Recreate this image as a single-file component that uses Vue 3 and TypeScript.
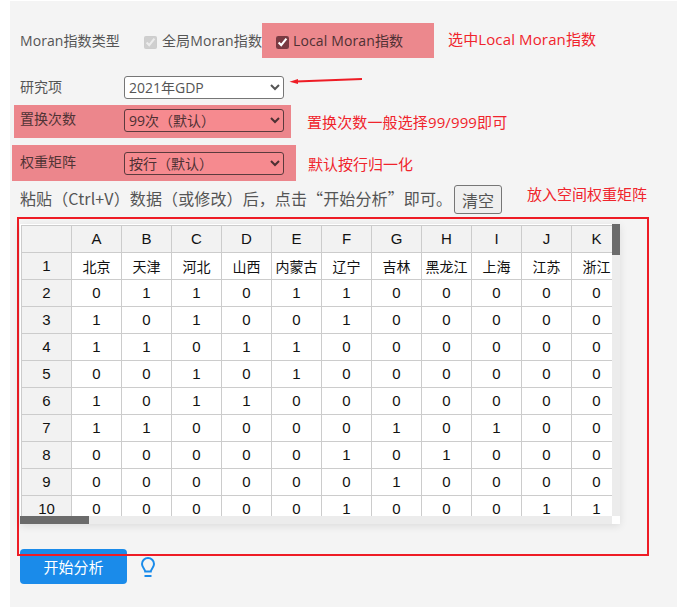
<script setup lang="ts">
const cols = ['A', 'B', 'C', 'D', 'E', 'F', 'G', 'H', 'I', 'J', 'K']
const names = ['北京', '天津', '河北', '山西', '内蒙古', '辽宁', '吉林', '黑龙江', '上海', '江苏', '浙江']
const rows: number[][] = [
  [0, 1, 1, 0, 1, 1, 0, 0, 0, 0, 0],
  [1, 0, 1, 0, 0, 1, 0, 0, 0, 0, 0],
  [1, 1, 0, 1, 1, 0, 0, 0, 0, 0, 0],
  [0, 0, 1, 0, 1, 0, 0, 0, 0, 0, 0],
  [1, 0, 1, 1, 0, 0, 0, 0, 0, 0, 0],
  [1, 1, 0, 0, 0, 0, 1, 0, 1, 0, 0],
  [0, 0, 0, 0, 0, 1, 0, 1, 0, 0, 0],
  [0, 0, 0, 0, 0, 0, 1, 0, 0, 0, 0],
  [0, 0, 0, 0, 0, 1, 0, 0, 0, 1, 1],
]
</script>

<template>
  <div class="page">
    <div class="panel">
      <div class="type-row">
        <span class="type-label">Moran指数类型</span>
        <label class="check muted">
          <input type="checkbox" checked disabled />
          <span>全局Moran指数</span>
        </label>
        <label class="check local">
          <input type="checkbox" checked />
          <span>Local Moran指数</span>
        </label>
        <span class="note note-type">选中Local Moran指数</span>
      </div>

      <div class="field field-item">
        <span class="field-label item-label">研究项</span>
        <select class="sel"><option>2021年GDP</option></select>
        <svg class="arrow" width="76" height="12" viewBox="0 0 76 12">
          <path d="M7 6.5 L73 4" stroke="#ee1c25" stroke-width="1.8" fill="none" />
          <path d="M0.5 6.8 L9 4 L9 9 Z" fill="#ee1c25" />
        </svg>
      </div>

      <div class="field field-perm">
        <span class="field-label lift">置换次数</span>
        <select class="sel tint"><option>99次（默认）</option></select>
        <span class="note note-perm">置换次数一般选择99/999即可</span>
      </div>

      <div class="field field-weight">
        <span class="field-label lift">权重矩阵</span>
        <select class="sel tint"><option>按行（默认）</option></select>
        <span class="note note-weight">默认按行归一化</span>
      </div>

      <div class="paste-row">
        <span class="paste-text">粘贴（Ctrl+V）数据（或修改）后，点击“开始分析”即可。</span>
        <button class="clear">清空</button>
        <span class="note note-matrix">放入空间权重矩阵</span>
      </div>

      <div class="matrix-frame">
        <div class="sheet">
          <div class="sheet-clip">
            <table>
              <thead>
                <tr>
                  <th></th>
                  <th v-for="c in cols" :key="c">{{ c }}</th>
                </tr>
              </thead>
              <tbody>
                <tr>
                  <th>1</th>
                  <td v-for="n in names" :key="n" class="name">{{ n }}</td>
                </tr>
                <tr v-for="(r, i) in rows" :key="i">
                  <th>{{ i + 2 }}</th>
                  <td v-for="(v, j) in r" :key="j">{{ v }}</td>
                </tr>
              </tbody>
            </table>
          </div>
          <div class="bar-v"><div class="thumb-v"></div></div>
          <div class="bar-h"><div class="thumb-h"></div></div>
        </div>
      </div>

      <div class="action-row">
        <button class="start">开始分析</button>
        <svg class="bulb" width="14" height="20" viewBox="0 0 14 20" fill="none" stroke="#1a8bea" stroke-width="2">
          <path d="M4.2 14.5 C4 12 1 10.5 1 7 A6 6 0 0 1 13 7 C13 10.5 10 12 9.8 14.5 Z" />
          <path d="M3.5 19 H10.5" />
        </svg>
      </div>
    </div>
  </div>
</template>

<style>
html, body { margin: 0; background: #fff; }
</style>

<style scoped>
.page {
  width: 677px;
  height: 607px;
  overflow: hidden;
  background: #fff;
  padding: 1px 0 0 10px;
  box-sizing: border-box;
  font-family: "Open Sans", "Noto Sans CJK SC", sans-serif;
  color: #555;
  font-size: 14px;
}
.panel {
  background: #f4f4f4;
  height: 606px;
  padding: 22px 0 0 10px;
  box-sizing: border-box;
  position: relative;
  z-index: 0;
}
.type-row {
  height: 35px;
  display: flex;
  align-items: center;
  position: relative;
  white-space: nowrap;
}
.type-label { width: 124px; margin-top: -2px; letter-spacing: 0.08px; }
.check { display: flex; align-items: center; }
.check span { margin-top: -2px; letter-spacing: 0.1px; }
.check input { width: 13px; height: 13px; margin: 3px 5px 0 0; accent-color: #7a3a42; }
.check.muted { width: 132px; }
.note { color: #f0242c; font-size: 15px; white-space: nowrap; }
.note-type { margin-left: 14px; margin-top: -4px; letter-spacing: 0.13px; }
.local { position: relative; width: 158px; height: 35px; color: #4f3033; }
.local input { margin-right: 4px; }
.local span { letter-spacing: 0.13px; }
.local::before {
  content: "";
  position: absolute;
  left: -14px;
  top: 0;
  width: 172px;
  height: 35px;
  background: #ec888d;
  z-index: -1;
}
.field {
  display: flex;
  align-items: center;
  position: relative;
  height: 23px;
}
.field-label { width: 104px; flex: none; }
.item-label { margin-top: -4px; }
.lift { margin-top: -5px; color: #503335; }
.sel {
  width: 160px;
  height: 23px;
  flex: none;
  box-sizing: border-box;
  font: 14px "Open Sans", "Noto Sans CJK SC", sans-serif;
  color: #555;
  background: #fff;
  border: 1px solid #767676;
  border-radius: 3px;
  padding: 0;
}
.sel.tint { background: #f68a8f; color: #4d3033; border-color: #5b3a3d; }
.field-item { margin-top: 18px; }
.field-perm { margin-top: 10px; }
.field-weight { margin-top: 20px; }
.arrow { position: absolute; left: 269px; top: -1px; }
.field-perm::before, .field-weight::before {
  content: "";
  position: absolute;
  background: #ec868c;
  z-index: -1;
}
.field-perm::before { left: -6px; top: -4px; width: 277px; height: 33px; }
.field-weight::before { left: -8px; top: -7px; width: 284px; height: 36px; }
.note-perm { margin-left: 23px; margin-top: 2px; letter-spacing: 0.12px; }
.note-weight { margin-left: 24px; margin-top: -1px; }
.paste-row {
  display: flex;
  align-items: center;
  height: 29px;
  margin-top: 10px;
  white-space: nowrap;
}
.paste-text {
  font-family: "Noto Sans CJK SC", sans-serif;
  font-size: 16px;
  letter-spacing: 0.12px;
  width: 434px;
  flex: none;
  margin-bottom: 4px;
}
.clear {
  width: 48px;
  height: 29px;
  padding: 0;
  box-sizing: border-box;
  font: 16px "Open Sans", "Noto Sans CJK SC", sans-serif;
  color: #555;
  background: #efefef;
  border: 1px solid #767676;
  border-radius: 3px;
}
.note-matrix { margin-left: 25px; margin-top: -13px; }
.matrix-frame {
  margin: 3px 0 0 -3px;
  width: 632px;
  height: 339px;
  box-sizing: border-box;
  border: 2px solid #ee1c25;
  padding: 5px 0 0 1px;
  position: relative;
  z-index: 1;
  pointer-events: none;
}
.sheet {
  width: 600px;
  height: 300px;
  position: relative;
  background: #fff;
  box-shadow: 0 2px 8px rgba(0, 0, 0, 0.1);
}
.sheet-clip {
  position: absolute;
  left: 0;
  top: 0;
  width: 592px;
  height: 292px;
  overflow: hidden;
}
table {
  border-collapse: collapse;
  table-layout: fixed;
  width: 600px;
  margin: 1px 0 0 1px;
  font-family: "Liberation Sans", "Noto Sans CJK SC", sans-serif;
  font-size: 15px;
  color: #111;
}
th, td {
  width: 50px;
  min-width: 50px;
  height: 27px;
  padding: 0 0 1px;
  box-sizing: border-box;
  border: 1px solid #ccc;
  text-align: center;
  font-weight: 400;
  background: #fff;
}
th { background: #f2f2f2; }
.name { font-size: 14px; }
.bar-v {
  position: absolute;
  right: 0;
  top: 0;
  width: 8px;
  height: 292px;
  background: #ececec;
}
.thumb-v { width: 8px; height: 31px; background: #6b6b6b; }
.bar-h {
  position: absolute;
  left: 0;
  top: 292px;
  width: 592px;
  height: 8px;
  background: #ececec;
}
.thumb-h { width: 69px; height: 8px; background: #6b6b6b; }
.action-row {
  display: flex;
  align-items: center;
  margin-top: -7px;
}
.start {
  width: 107px;
  height: 35px;
  padding: 0;
  border: 0;
  border-radius: 4px;
  background: #1a8bea;
  color: #fff;
  font: 15px "Open Sans", "Noto Sans CJK SC", sans-serif;
}
.bulb { margin-left: 14px; }
</style>
